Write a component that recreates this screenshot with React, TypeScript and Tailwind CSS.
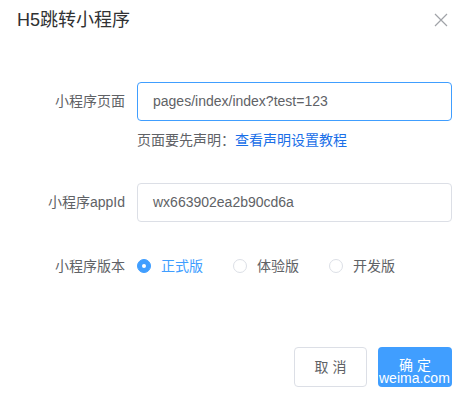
import { useState } from 'react'

const font = { fontFamily: '"Liberation Sans", "Noto Sans CJK SC", sans-serif' }

const versions = ['正式版', '体验版', '开发版']

export default function App() {
  const [version, setVersion] = useState('正式版')

  return (
    <div className="w-[459px] h-[393px] bg-white overflow-hidden relative text-[#606266]" style={font}>
      {/* header */}
      <div className="flex items-center justify-between pt-[9px] pl-[17px] pr-[11px]">
        <span className="text-[18px] leading-[22px] text-[#303133]">H5跳转小程序</span>
        <svg width="14" height="14" viewBox="0 0 14 14" className="text-[#a0a3a8]">
          <path d="M1 1 L13 13 M13 1 L1 13" stroke="currentColor" strokeWidth="1.2" />
        </svg>
      </div>

      <div className="pl-[17px] pr-[7px]">
        {/* 页面 */}
        <div className="flex items-center mt-[51px]">
          <label className="w-[108px] text-right text-[14px]">小程序页面</label>
          <div className="ml-[12px] w-[315px] h-[39px] border border-[#409eff] rounded-[4px] flex items-center px-[15px] text-[14px] text-[#606266]">
            pages/index/index?test=123
          </div>
        </div>
        <div className="ml-[120px] mt-[9px] text-[14px] leading-[20px] text-[#606266]">
          页面要先声明：<span className="text-[#1a6fe8]">查看声明设置教程</span>
        </div>

        {/* appId */}
        <div className="flex items-center mt-[33px]">
          <label className="w-[108px] text-right text-[14px]">小程序appId</label>
          <div className="ml-[12px] w-[315px] h-[39px] border border-[#dcdfe6] rounded-[4px] flex items-center px-[15px] text-[14px] text-[#606266]">
            wx663902ea2b90cd6a
          </div>
        </div>

        {/* version */}
        <div className="flex items-center mt-[34px] h-[20px]">
          <label className="w-[108px] text-right text-[14px]">小程序版本</label>
          <div className="ml-[12px] flex items-center">
            {versions.map(v => {
              const on = v === version
              return (
                <div
                  key={v}
                  onClick={() => setVersion(v)}
                  className="flex items-center mr-[30px] cursor-pointer"
                >
                  <span
                    className={`w-[14px] h-[14px] rounded-full border flex items-center justify-center ${
                      on ? 'bg-[#409eff] border-[#409eff]' : 'border-[#dcdfe6] bg-white'
                    }`}
                  >
                    {on && <span className="w-[4px] h-[4px] rounded-full bg-white" />}
                  </span>
                  <span className={`ml-[10px] text-[14px] ${on ? 'text-[#409eff]' : 'text-[#606266]'}`}>{v}</span>
                </div>
              )
            })}
          </div>
        </div>

        {/* footer */}
        <div className="flex justify-end gap-[11px] mt-[71px]">
          <button className="w-[73px] h-[40px] border border-[#dcdfe6] rounded-[4px] text-[14px] text-[#606266] bg-white">
            取 消
          </button>
          <button className="relative overflow-hidden w-[74px] h-[40px] rounded-[4px] text-[14px] text-white bg-[#409eff]">
            <span className="relative -top-[2px]">确 定</span>
            {/* watermark */}
            <span className="absolute left-[1px] top-[23px] text-[14px] leading-[16px] whitespace-nowrap text-white">
              weima.com
            </span>
          </button>
        </div>
      </div>
    </div>
  )
}
